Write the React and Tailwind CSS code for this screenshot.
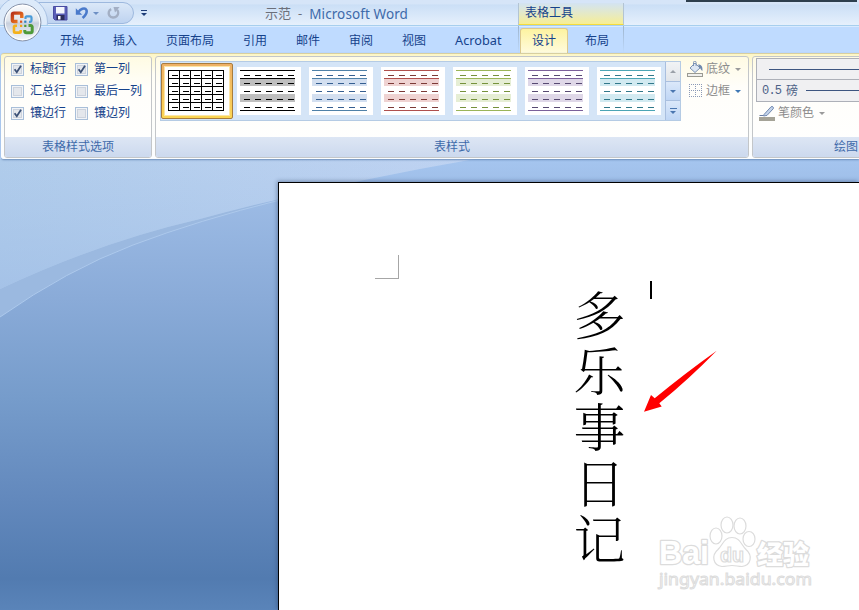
import React from 'react';

const tabs = ['开始', '插入', '页面布局', '引用', '邮件', '审阅', '视图'];

const options = [
  { label: '标题行', checked: true },
  { label: '第一列', checked: true },
  { label: '汇总行', checked: false },
  { label: '最后一列', checked: false },
  { label: '镶边行', checked: true },
  { label: '镶边列', checked: false },
];

const tableStyles = [
  { id: 'dark', line: '#000000', dash: '#000000', band: '#bfbfbf' },
  { id: 'blue', line: '#4f81a8', dash: '#365f91', band: '#d3dff0' },
  { id: 'red', line: '#b0504d', dash: '#7c3a37', band: '#efd3d2' },
  { id: 'green', line: '#9bb558', dash: '#76923c', band: '#e6eed5' },
  { id: 'purple', line: '#7b609a', dash: '#574a72', band: '#dfd8e8' },
  { id: 'teal', line: '#4ba5b5', dash: '#31788a', band: '#d2eaf1' },
];

const steps = [0, 1, 2, 3, 4];

const OfficeButton = () => (
  <svg className="absolute left-[2px] top-[2px] z-10" width="41" height="41" viewBox="0 0 41 41">
    <defs>
      <linearGradient id="orb" x1="0" y1="0" x2="0" y2="1">
        <stop offset="0" stopColor="#fdfdfe" />
        <stop offset="0.45" stopColor="#dfe4ec" />
        <stop offset="0.52" stopColor="#c8d0dd" />
        <stop offset="1" stopColor="#f6f9fd" />
      </linearGradient>
      <linearGradient id="orbRed" x1="0" y1="0" x2="1" y2="1">
        <stop offset="0" stopColor="#b8331a" />
        <stop offset="1" stopColor="#f58220" />
      </linearGradient>
    </defs>
    <circle cx="20.5" cy="20.5" r="18.4" fill="url(#orb)" stroke="#7f8ba3" strokeWidth="1" />
    <circle cx="20.5" cy="20.5" r="17.2" fill="none" stroke="#ffffff" strokeWidth="1.2" opacity="0.8" />
    <g fill="none">
      <path d="M15.5 19.5h-3.5a1.6 1.6 0 0 1-1.6-1.6v-5.2a1.6 1.6 0 0 1 1.6-1.6h6.2a1.6 1.6 0 0 1 1.6 1.6v3.3" stroke="url(#orbRed)" strokeWidth="3.4" />
      <path d="M23.5 17v-1.4a1.2 1.2 0 0 1 1.2-1.2h3.6a1.2 1.2 0 0 1 1.2 1.2v3a1.2 1.2 0 0 1-1.2 1.2H27" stroke="#4a9bd8" strokeWidth="2.2" />
      <path d="M15 23.8h-1.8a1.2 1.2 0 0 0-1.2 1.2v4.4a1.2 1.2 0 0 0 1.2 1.2h4.3a1.2 1.2 0 0 0 1.2-1.2V28" stroke="#f4b11c" strokeWidth="2.6" />
      <path d="M26.5 23.6h2.4a1.3 1.3 0 0 1 1.3 1.3v4.6a1.3 1.3 0 0 1-1.3 1.3h-4.8a1.3 1.3 0 0 1-1.3-1.3V28" stroke="#4f9a3a" strokeWidth="3" />
    </g>
    <g>
      <rect x="18" y="18.6" width="2.2" height="2.2" fill="#e2541b" />
      <rect x="22.2" y="18.6" width="2.2" height="2.2" fill="#2d7fc4" />
      <rect x="18" y="22.8" width="2.2" height="2.2" fill="#f0a31a" />
      <rect x="22.2" y="22.8" width="2.2" height="2.2" fill="#4f9a3a" />
    </g>
  </svg>
);

const SaveIcon = () => (
  <svg width="15" height="15" viewBox="0 0 15 15">
    <path d="M0.5 0.5h13.5v13.5h-12l-1.5-1.5z" fill="#5a5fb8" stroke="#4a4da2" />
    <rect x="3" y="1" width="8.5" height="6.5" fill="#f4f6fd" />
    <rect x="3.5" y="9" width="8" height="5" fill="#2c2e5c" />
    <rect x="5" y="10" width="2.5" height="3.5" fill="#ffffff" />
  </svg>
);

const UndoIcon = () => (
  <svg width="14" height="14" viewBox="0 0 14 14" fill="none">
    <path d="M3.5 6C5 3.2 10 1 11.4 4c0.9 2.2-0.5 5-3.8 8" stroke="#4a7acb" strokeWidth="2.6" />
    <path d="M0.8 2.2v6.6h6.4z" fill="#4a7acb" />
  </svg>
);

const RedoIcon = () => (
  <svg width="14" height="14" viewBox="0 0 14 14" fill="none">
    <path d="M4.2 3.2C1.6 4.4 1 7.4 2.4 9.6c1.6 2.4 5.4 2.6 7.4 0.6 1.8-1.8 1.8-4.6 0.2-6.4" stroke="#a3afc4" strokeWidth="2.4" />
    <path d="M6.5 1h6.1L8 6.5z" fill="#a3afc4" />
  </svg>
);

const Caret = ({ color }) => (
  <svg width="6" height="3" viewBox="0 0 6 3">
    <path d="M0 0h6L3 3z" fill={color} />
  </svg>
);

const Checkbox = ({ checked }) => (
  <span className="flex h-[13px] w-[13px] shrink-0 items-center justify-center border border-[#a9bfd9] bg-[#f2f4f7]">
    <svg width="11" height="11" viewBox="0 0 11 11" fill="none">
      <rect x="1.5" y="1.5" width="8" height="8" fill="#e4e7ec" stroke="#cdd3dd" />
      {checked && <path d="M2.6 5.2l2.2 3L9 1.8" stroke="#3c5177" strokeWidth="1.8" />}
    </svg>
  </span>
);

const GridThumb = () => (
  <svg width="64" height="48" shapeRendering="crispEdges">
    <rect width="64" height="48" fill="#fff" />
    {[0, 1, 2, 3, 4, 5].map((i) => (
      <g key={i} fill="#000">
        <rect x={3 + i * 11} y="3" width="1" height="41" />
        <rect x="3" y={3 + i * 8} width="56" height="1" />
      </g>
    ))}
    {steps.map((r) => steps.map((c) => <rect key={`${r}${c}`} x={7 + c * 11} y={8 + r * 8} width="6" height="1" fill="#000" />))}
  </svg>
);

const StyleThumb = ({ line, dash, band }) => (
  <svg width="64" height="48" shapeRendering="crispEdges">
    <rect width="64" height="48" fill="#fff" />
    <rect x="3" y="12" width="55" height="7" fill={band} />
    <rect x="3" y="27" width="55" height="8" fill={band} />
    {[3, 11, 43].map((y) => (
      <rect key={y} x="3" y={y} width="55" height="1" fill={line} />
    ))}
    {steps.map((r) => steps.map((c) => <rect key={`${r}${c}`} x={7 + c * 11} y={8 + r * 8} width="6" height="1" fill={dash} />))}
  </svg>
);

const BucketIcon = () => (
  <svg width="17" height="16" viewBox="0 0 17 16">
    <path d="M3 7l5-5 5 5-5 4.5z" fill="#dce6f3" stroke="#7c93b5" />
    <path d="M6.5 5V1.5a1.3 1.3 0 0 1 2.6 0V5" fill="none" stroke="#7c93b5" />
    <path d="M11 3.5c3 0 5 1.6 4.4 6.5-1.4-0.8-1.8-2.6-3-3.4z" fill="#6f88ad" />
    <rect x="0.5" y="12.5" width="15" height="3" fill="#f1f1ee" stroke="#9b9b93" />
  </svg>
);

const BorderIcon = () => (
  <svg width="14" height="14" viewBox="0 0 14 14" fill="none" stroke="#8c9bb8" strokeDasharray="1 1" shapeRendering="crispEdges">
    <path d="M0 0.5h13M0 6.5h13M0 12.5h13M0.5 0v13M6.5 0v13M12.5 0v13" />
  </svg>
);

const PenIcon = () => (
  <svg width="17" height="16" viewBox="0 0 17 16">
    <path d="M5 9.5L12 1.8c1.4-1 3.2 0.6 2.2 2L8 10.4 4.6 11z" fill="#c3d3ea" stroke="#7189b0" />
    <path d="M0.5 10.5h4" stroke="#6a7fa5" />
    <rect x="0" y="12" width="16" height="4" fill="#a5a397" />
  </svg>
);

const Group = ({ title, className, children }) => (
  <section className={`flex h-[102px] shrink-0 flex-col overflow-hidden rounded-[3px] border border-[#c3c6c9] bg-linear-to-b from-[#fffbe3] via-[#fffefa] via-30% to-white ${className}`}>
    <div className="h-[80px]">{children}</div>
    <div className="flex h-5 items-center justify-center bg-linear-to-b from-[#dde6f4] to-[#ccd9ee] text-[#3e6aaa]">{title}</div>
  </section>
);

const TitleBar = () => (
  <header className="relative flex h-[25px] overflow-hidden bg-linear-to-b from-[#d6e5f8] from-15% via-[#cbdff6] via-20% to-[#e6f0fc]">
    <div className="ml-[28px] mt-[2px] flex h-[22px] w-[106px] items-center rounded-r-full border border-[#9db8de] bg-linear-to-b from-[#dbe8f8] to-[#bed3f0] pl-[24px]">
      <SaveIcon />
      <span className="ml-[7px] flex"><UndoIcon /></span>
      <span className="ml-[4px]"><Caret color="#6d8fc4" /></span>
      <span className="ml-[8px] flex"><RedoIcon /></span>
    </div>
    <div className="absolute -left-[4px] -top-[4px] h-[52px] w-[52px] rounded-full border border-[#a9c2e4] bg-[#dceafa]" />
    <div className="ml-[7px] mt-[10px] flex h-[6px] flex-col items-center gap-[2px]">
      <span className="h-px w-[6px] bg-[#1d3c78]" />
      <Caret color="#1d3c78" />
    </div>
    <div className="ml-[118px] mt-[4px] flex h-5 w-[253px] items-center gap-[7px] text-[13px] text-[#6b6f7a]">
      <span>示范</span>
      <span>-</span>
      <span className="text-[13.5px] tracking-[0.1px] text-[#3e6aaa]">Microsoft Word</span>
    </div>
    <div className="mt-[3px] flex h-[22px] w-[106px] items-center border-x border-b border-[#b3c4d3] border-b-[#f5dc3c] bg-linear-to-b from-[#d3e3f2] to-[#f7ee92] pb-[2px] pl-[6px] text-xs text-[#15428b]">
      表格工具
    </div>
    <div className="ml-[62px] h-[2px] w-[171px] bg-[#2e3f4e]" />
  </header>
);

const TabBar = () => (
  <nav className="flex h-[28px] items-end border-t border-[#a7cfee] bg-[#bfdbff] pl-[60px] text-[#15428b] shadow-[inset_0_1px_0_#d9ebff]">
    <div className="flex h-[25px] w-[458px] shrink-0 items-center gap-[29px]">
      {tabs.map((t) => (
        <span key={t}>{t}</span>
      ))}
      <span className="text-[12.7px]">Acrobat</span>
    </div>
    <div className="flex h-full w-[106px] items-end">
      <span className="h-full w-px bg-linear-to-b from-[#9db4cc] to-[#bfdbff]" />
      <span className="ml-px flex h-[25px] w-[48px] items-center justify-center rounded-t-[3px] border-x border-t border-[#dcc98e] bg-linear-to-b from-[#fdf3a0] to-[#fffbdd]">
        设计
      </span>
      <span className="ml-[17px] flex h-[25px] items-center">布局</span>
      <span className="ml-auto h-full w-px bg-linear-to-b from-[#9db4cc] to-[#bfdbff]" />
    </div>
  </nav>
);

const ScrollButton = ({ disabled, more }) => (
  <span className={`flex flex-1 flex-col items-center justify-center gap-[2px] border-b border-[#a9bfdf] last:border-b-0 ${disabled ? 'bg-linear-to-b from-[#f1f3f5] to-[#e1e5ea]' : 'bg-linear-to-b from-[#dbe8fa] to-[#bfd6f5]'}`}>
    {more && <span className="h-px w-[7px] bg-[#4a76b0]" />}
    <span className={disabled ? 'flex rotate-180' : 'flex'}>
      <Caret color={disabled ? '#9aa0a8' : '#4a76b0'} />
    </span>
  </span>
);

const Ribbon = () => (
  <div className="relative z-[1] ml-px h-[106px] overflow-hidden rounded-l-[3px] border-t border-[#d8cfa0] bg-linear-to-b from-[#fdf6c5] via-[#fffef6] via-20% to-[#fbfdff] pl-[3px] pt-[2px] shadow-[0_1px_2px_#6c8dba]">
    <div className="flex gap-[3px]">
      <Group title="表格样式选项" className="w-[148px]">
        <div className="grid grid-cols-[64px_auto] pl-[6px] pt-px">
          {options.map((o) => (
            <label key={o.label} className="flex h-[22px] items-center gap-[6px] whitespace-nowrap text-[#15428b]">
              <Checkbox checked={o.checked} />
              {o.label}
            </label>
          ))}
        </div>
      </Group>

      <Group title="表样式" className="w-[594px]">
        <div className="flex pl-[4px] pt-[4px]">
          <div className="flex h-[60px] w-[521px] border border-[#b5cbe4] bg-[#d5e5f7]">
            <div className="mt-px h-[56px] w-[72px] rounded-[2px] border border-[#a87c3c] bg-linear-to-b from-[#eeb066] to-[#fbd552] p-[2px]">
              <div className="border border-[#fbe5a6]">
                <GridThumb />
              </div>
            </div>
            <div className="flex gap-2 pl-1 pt-[5px]">
              {tableStyles.map((s) => (
                <StyleThumb key={s.id} line={s.line} dash={s.dash} band={s.band} />
              ))}
            </div>
            <div className="ml-auto flex w-[15px] flex-col border-l border-[#a9bfdf]">
              <ScrollButton disabled />
              <ScrollButton />
              <ScrollButton more />
            </div>
          </div>
          <div className="flex flex-col pl-[6px] text-[#8d8d8d]">
            <div className="-mt-[3px] flex h-[22px] items-center">
              <BucketIcon />
              <span className="ml-[2px] mr-[5px]">底纹</span>
              <Caret color="#9a9a9a" />
            </div>
            <div className="flex h-[22px] items-center pl-[2px]">
              <BorderIcon />
              <span className="ml-[3px] mr-[5px]">边框</span>
              <Caret color="#3f78b5" />
            </div>
          </div>
        </div>
      </Group>

      <Group title={<span className="mr-auto pl-[81px]">绘图</span>} className="w-[180px]">
        <div className="pl-[3px] pt-px">
          <div className="flex h-[22px] items-center border border-[#adb0b8] bg-[#f0f0f2] pl-[12px]">
            <span className="h-px flex-1 bg-[#3d5580]" />
          </div>
          <div className="flex h-[22px] items-center border border-t-0 border-[#adb0b8] bg-[#f0f0f2] pl-[5px] text-[#4c6187]">
            <span className="w-[24px] font-['Liberation_Mono',monospace] tracking-[-0.8px]">0.5</span>
            <span className="w-[20px]">磅</span>
            <span className="h-px flex-1 bg-[#3d5580]" />
          </div>
          <div className="flex h-[22px] items-center pl-[3px] text-[#8d8d8d]">
            <PenIcon />
            <span className="ml-[2px] mr-[5px]">笔颜色</span>
            <Caret color="#9a9a9a" />
          </div>
        </div>
      </Group>
    </div>
  </div>
);

const Backdrop = () => (
  <svg className="absolute inset-0" width="859" height="451" viewBox="0 159 859 451">
    <defs>
      <linearGradient id="sky" x1="0" y1="0" x2="1" y2="0">
        <stop offset="0" stopColor="#b0cceb" />
        <stop offset="1" stopColor="#bfd3f2" />
      </linearGradient>
      <linearGradient id="skyFade" x1="0" y1="0" x2="0" y2="1">
        <stop offset="0" stopColor="#a4c2e8" stopOpacity="0" />
        <stop offset="1" stopColor="#a0bee6" />
      </linearGradient>
    </defs>
    <path d="M0 317Q67 270 133 245T280 200L200 215 0 280z" fill="#9bb9e0" />
    <path d="M0 159V289Q100 242 200 219Q330 184 475 159z" fill="url(#sky)" />
    <path d="M0 159V289Q100 242 200 219Q330 184 475 159z" fill="url(#skyFade)" opacity="0.7" />
    <path d="M0 317Q67 270 133 245T280 200" fill="none" stroke="#adc9ec" strokeWidth="1" />
  </svg>
);

const Arrow = () => (
  <svg className="absolute left-[364px] top-[166px]" width="76" height="66" viewBox="0 0 76 66">
    <path d="M73.7 1.700Q46 30 16.300 54.300L18.700 57.500 1 62.700 8 46l3.700 3.300Q41 25 73.700 1.700z" fill="#f00" />
  </svg>
);

const Watermark = () => (
  <svg className="absolute left-[372px] top-[325px]" width="170" height="90" viewBox="0 0 170 90" fill="#fff" stroke="#dcdcdc" strokeWidth="1.2">
    <g fontFamily="'Liberation Sans','Noto Sans CJK SC',sans-serif" fontWeight="700">
      <g fontWeight="900" strokeWidth="2.6" strokeLinejoin="round" paintOrder="stroke">
        <text x="8" y="56" fontSize="33" textLength="50" lengthAdjust="spacingAndGlyphs">Bai</text>
        <text x="106" y="56" fontSize="26" textLength="52" lengthAdjust="spacingAndGlyphs">经验</text>
      </g>
      <ellipse cx="65" cy="28" rx="6" ry="8" />
      <ellipse cx="76" cy="17" rx="6" ry="8" />
      <ellipse cx="89" cy="18" rx="6" ry="8" />
      <ellipse cx="98" cy="31" rx="6" ry="7.5" />
      <path d="M81 29.5c8 0 9 7 14 12 7 6 5 16-4 17-4 0-6-1-10-1s-6 1-10 1c-9-1-11-11-4-17 5-5 6-12 14-12z" />
      <text x="69" y="54" fontSize="20" textLength="24" lengthAdjust="spacingAndGlyphs">du</text>
    </g>
    <text x="8" y="77" fontSize="16.5" fontFamily="'Noto Sans',sans-serif" textLength="153" lengthAdjust="spacingAndGlyphs" strokeWidth="1">jingyan.baidu.com</text>
  </svg>
);

const Page = () => (
  <div className="relative ml-[278px] mt-[23px] h-[428px] w-[581px] overflow-hidden border-l border-t border-black bg-white shadow-[-1px_-1px_4px_rgba(40,60,100,0.45)]">
    <div className="absolute left-[96px] top-[72px] h-[24px] w-[24px] border-b border-r border-[#a6a6a6]" />
    <div className="flex items-start pl-[294px] pt-[98px] text-black">
      <p className="mt-[8px] w-[52px] whitespace-nowrap font-['Noto_Serif_CJK_SC','Noto_Sans_CJK_SC',serif] text-[52px] font-light leading-[52px] tracking-[4px] [writing-mode:vertical-rl]">
        多乐事日记
      </p>
      <span className="ml-[25px] h-[18px] w-[2px] bg-black" />
    </div>
    <Arrow />
    <Watermark />
  </div>
);

const App = () => (
  <div className="relative h-[610px] w-[859px] overflow-hidden bg-[#bfdbff] font-['Noto_Sans','Noto_Sans_CJK_SC',sans-serif] text-xs">
    <OfficeButton />
    <TitleBar />
    <TabBar />
    <Ribbon />
    <main className="relative flex h-[451px]">
      <div className="absolute inset-0 bg-[linear-gradient(180deg,#a5c5ef_0%,#9bbae4_10%,#8aabd8_31%,#769ccb_53%,#6389bd_75%,#527bb0_93%,#5a84b9_100%)]" />
      <Backdrop />
      <Page />
    </main>
  </div>
);

export default App;
